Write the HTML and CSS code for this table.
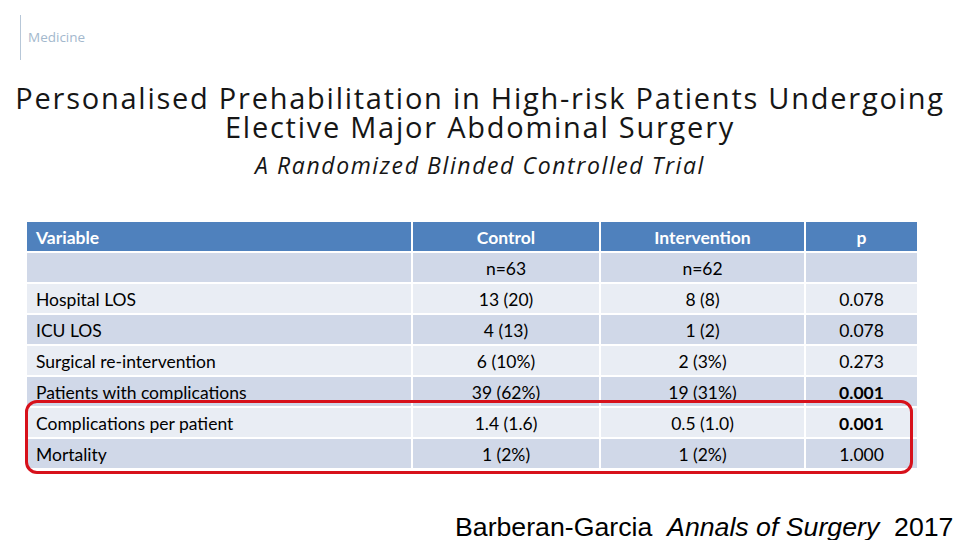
FILE: index.html
```html
<!DOCTYPE html>
<html>
<head>
<meta charset="utf-8">
<link rel="stylesheet" href="styles.css">
</head>
<body>
<div class="slide">
  <div class="brand"><span class="brand-name">Medicine</span></div>
  <div class="titles">
    <h1 class="title"><span class="title-line">Personalised Prehabilitation in High-risk Patients Undergoing</span><span class="title-line">Elective Major Abdominal Surgery</span></h1>
    <div class="subtitle">A Randomized Blinded Controlled Trial</div>
  </div>
  <div class="table-wrap">
    <div class="grid">
      <div class="cell head left">Variable</div>
      <div class="cell head">Control</div>
      <div class="cell head">Intervention</div>
      <div class="cell head">p</div>

      <div class="cell dark left"></div>
      <div class="cell dark">n=63</div>
      <div class="cell dark">n=62</div>
      <div class="cell dark"></div>

      <div class="cell light left">Hospital LOS</div>
      <div class="cell light">13 (20)</div>
      <div class="cell light">8 (8)</div>
      <div class="cell light">0.078</div>

      <div class="cell dark left">ICU LOS</div>
      <div class="cell dark">4 (13)</div>
      <div class="cell dark">1 (2)</div>
      <div class="cell dark">0.078</div>

      <div class="cell light left">Surgical re-intervention</div>
      <div class="cell light">6 (10%)</div>
      <div class="cell light">2 (3%)</div>
      <div class="cell light">0.273</div>

      <div class="cell dark left">Patients with complications</div>
      <div class="cell dark">39 (62%)</div>
      <div class="cell dark">19 (31%)</div>
      <div class="cell dark bold">0.001</div>

      <div class="cell light left">Complications per patient</div>
      <div class="cell light">1.4 (1.6)</div>
      <div class="cell light">0.5 (1.0)</div>
      <div class="cell light bold">0.001</div>

      <div class="cell dark left">Mortality</div>
      <div class="cell dark">1 (2%)</div>
      <div class="cell dark">1 (2%)</div>
      <div class="cell dark">1.000</div>
    </div>
    <div class="highlight"></div>
  </div>
  <div class="citation">Barberan-Garcia&nbsp; <i>Annals of Surgery</i>&nbsp; 2017</div>
</div>
</body>
</html>
```
FILE: styles.css
```css
html, body {
  margin: 0;
  padding: 0;
  background: #ffffff;
}

.slide {
  width: 960px;
  height: 540px;
  overflow: hidden;
  display: flex;
  flex-direction: column;
}

.slide > * {
  flex-shrink: 0;
}

.brand {
  margin: 15px 0 0 20px;
  height: 45px;
  border-left: 1px solid #b7c7d8;
  display: flex;
  align-items: center;
  padding-left: 7px;
}

.brand-name {
  font-family: "Open Sans", "DejaVu Sans", sans-serif;
  font-size: 13.5px;
  color: #a3b8cd;
  margin-top: -2px;
}

.titles {
  text-align: center;
  color: #161616;
}

.title {
  margin: 23px 0 0 0;
  font-family: "Open Sans", "DejaVu Sans", sans-serif;
  font-weight: 500;
  font-size: 29px;
  letter-spacing: 1.75px;
}

.title-line {
  display: block;
  line-height: 29px;
  white-space: nowrap;
}

.subtitle {
  margin-top: 11px;
  font-family: "Open Sans", "DejaVu Sans", sans-serif;
  font-style: italic;
  font-weight: 500;
  font-size: 23px;
  line-height: 26px;
  letter-spacing: 1.6px;
}

.table-wrap {
  position: relative;
  margin: 44px 0 0 27px;
  width: 890px;
}

.grid {
  display: grid;
  grid-template-columns: 384px 186px 203px 111px;
  grid-auto-rows: 29px;
  column-gap: 2px;
  row-gap: 2px;
  font-family: "Lato", "Open Sans", sans-serif;
  font-size: 17.5px;
  color: #000;
}

.cell {
  display: flex;
  align-items: center;
  justify-content: center;
  padding-top: 2px;
}

.cell.left {
  justify-content: flex-start;
  padding-left: 9px;
}

.head {
  background: #4f81bd;
  color: #ffffff;
  font-weight: 700;
}

.dark {
  background: #d0d8e8;
}

.light {
  background: #e9edf4;
}

.bold {
  font-weight: 700;
}

.highlight {
  position: absolute;
  left: -2px;
  top: 178px;
  width: 882px;
  height: 68px;
  border: 3px solid #d7111b;
  border-radius: 12px;
}

.citation {
  margin: 44px 0 0 455px;
  font-family: "Liberation Sans", Arial, sans-serif;
  font-size: 26.7px;
  line-height: 30px;
  color: #000;
  white-space: nowrap;
}
```
